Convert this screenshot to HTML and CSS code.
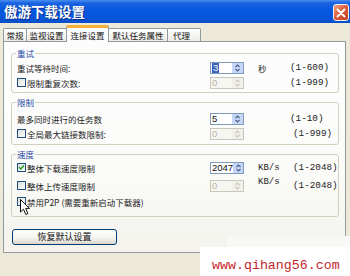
FILE: index.html
```html
<!DOCTYPE html>
<html lang="zh-CN">
<head>
<meta charset="utf-8">
<title>傲游下载设置</title>
<link rel="stylesheet" href="styles.css">
</head>
<body>
<div class="titlebar">
  <span class="title">傲游下载设置</span>
  <span class="close"><svg width="10" height="10" viewBox="0 0 10 10"><path d="M1.5 1.5 L8.5 8.5 M8.5 1.5 L1.5 8.5" stroke="#fff" stroke-width="2" stroke-linecap="round"/></svg></span>
</div>
<div class="tabs">
  <div class="tab t1">常规</div>
  <div class="tab t2">监视设置</div>
  <div class="tab t3 active">连接设置</div>
  <div class="tab t4">默认任务属性</div>
  <div class="tab t5">代理</div>
</div>
<div class="panel">
  <fieldset class="group g1">
    <legend>重试</legend>
    <div class="row">
      <span class="label">重试等待时间:</span>
      <span class="spin"><span class="val"><span class="sel">3</span></span><span class="arrows"><svg width="9" height="10" viewBox="0 0 9 10"><path d="M2.5 4 L4.5 2 L6.5 4 M2.5 6 L4.5 8 L6.5 6" fill="none" stroke="#4d6185" stroke-width="1.2"/></svg></span></span>
      <span class="unit">秒</span>
      <span class="range">(1-600)</span>
    </div>
    <div class="row">
      <span class="label"><span class="cb"></span>限制重复次数:</span>
      <span class="spin off"><span class="val">0</span><span class="arrows"><svg width="9" height="10" viewBox="0 0 9 10"><path d="M2.5 4 L4.5 2 L6.5 4 M2.5 6 L4.5 8 L6.5 6" fill="none" stroke="#c9c7ba" stroke-width="1.2"/></svg></span></span>
      <span class="unit"></span>
      <span class="range">(1-999)</span>
    </div>
  </fieldset>
  <fieldset class="group g2">
    <legend>限制</legend>
    <div class="row">
      <span class="label">最多同时进行的任务数</span>
      <span class="spin"><span class="val">5</span><span class="arrows"><svg width="9" height="10" viewBox="0 0 9 10"><path d="M2.5 4 L4.5 2 L6.5 4 M2.5 6 L4.5 8 L6.5 6" fill="none" stroke="#4d6185" stroke-width="1.2"/></svg></span></span>
      <span class="unit"></span>
      <span class="range">(1-10)</span>
    </div>
    <div class="row">
      <span class="label"><span class="cb"></span>全局最大链接数限制:</span>
      <span class="spin off"><span class="val">0</span><span class="arrows"><svg width="9" height="10" viewBox="0 0 9 10"><path d="M2.5 4 L4.5 2 L6.5 4 M2.5 6 L4.5 8 L6.5 6" fill="none" stroke="#c9c7ba" stroke-width="1.2"/></svg></span></span>
      <span class="unit"></span>
      <span class="range r2">(1-999)</span>
    </div>
  </fieldset>
  <fieldset class="group g3">
    <legend>速度</legend>
    <div class="row">
      <span class="label"><span class="cb"><svg width="7" height="7" viewBox="0 0 7 7"><path d="M1 3.2 L2.8 5 L6 1.5" fill="none" stroke="#21a121" stroke-width="1.5"/></svg></span>整体下载速度限制</span>
      <span class="spin"><span class="val">2047</span><span class="arrows"><svg width="9" height="10" viewBox="0 0 9 10"><path d="M2.5 4 L4.5 2 L6.5 4 M2.5 6 L4.5 8 L6.5 6" fill="none" stroke="#4d6185" stroke-width="1.2"/></svg></span></span>
      <span class="unit mono">KB/s</span>
      <span class="range r2">(1-2048)</span>
    </div>
    <div class="row r-mid">
      <span class="label"><span class="cb"></span>整体上传速度限制</span>
      <span class="spin off"><span class="val">0</span><span class="arrows"><svg width="9" height="10" viewBox="0 0 9 10"><path d="M2.5 4 L4.5 2 L6.5 4 M2.5 6 L4.5 8 L6.5 6" fill="none" stroke="#c9c7ba" stroke-width="1.2"/></svg></span></span>
      <span class="unit mono up">KB/s</span>
      <span class="range r2">(1-2048)</span>
    </div>
    <div class="row">
      <span class="label"><span class="cb"></span>禁用P2P (需要重新启动下载器)</span>
    </div>
  </fieldset>
  <div class="btn">恢复默认设置</div>
</div>
<svg class="cursor" width="11" height="17" viewBox="0 0 11 17"><path d="M0.5 0.5 L0.5 13 L3.5 10.2 L5.8 15.5 L7.9 14.6 L5.7 9.4 L9.5 9.4 Z" fill="#fff" stroke="#111" stroke-width="1" stroke-linejoin="round"/></svg>
<div class="strip"></div>
<div class="watermark">www.qihang56.com</div>
</body>
</html>
```

FILE: styles.css
```css
* { box-sizing: border-box; }
html, body { margin: 0; padding: 0; }
body {
  width: 350px;
  height: 276px;
  overflow: hidden;
  position: relative;
  background: #ece9d8;
  font-family: "Noto Sans CJK SC", "Noto Sans", sans-serif;
  font-size: 8.5px;
  color: #1c1c1c;
}
.titlebar {
  height: 23px;
  display: flex;
  align-items: center;
  justify-content: space-between;
  padding: 0 1px 0 4px;
  background: linear-gradient(#4a8ff0 0, #1a64e2 3px, #0758dd 10px, #0654d8 19px, #0a4fc8 23px);
}
.title {
  color: #fff;
  font-weight: bold;
  font-size: 13.5px;
  line-height: 23px;
  text-shadow: 1px 1px 0 #0a2f8a;
}
.close {
  width: 16px;
  height: 17px;
  margin-top: 2px;
  border: 1px solid #f4efe8;
  border-radius: 3px;
  background: linear-gradient(135deg, #f3a488, #dc5a36 50%, #c2401e);
  display: flex;
  align-items: center;
  justify-content: center;
}
.tabs {
  display: flex;
  align-items: flex-end;
  height: 18px;
  padding: 2px 0 0 3px;
}
.tab {
  height: 13px;
  border: 1px solid #919b9c;
  border-bottom: none;
  border-radius: 2px 2px 0 0;
  background: linear-gradient(#ffffff, #ecebe6);
  line-height: 12px;
  text-align: center;
  color: #111;
  white-space: nowrap;
}
.tab + .tab { margin-left: -1px; }
.t1 { width: 24px; }
.t2 { width: 41px; }
.t3 { width: 43px; }
.t4 { width: 60px; }
.t5 { width: 34px; text-align: left; padding-left: 5px; }
.tab.active {
  position: relative;
  z-index: 2;
  height: 17px;
  margin-bottom: -1px;
  border-top: 3px solid #f6b13b;
  background: #fcfcfe;
  line-height: 14px;
}
.panel {
  margin-left: 3px;
  width: 343px;
  border: 1px solid #919b9c;
  background: linear-gradient(#fdfdfe 0, #fbfbf9 60%, #f3f2ec 100%);
  padding: 5px 6px 7px 7px;
}
.group {
  margin: 0;
  min-width: 0;
  border: 1px solid #d0d0bf;
  border-radius: 3px;
  padding: 1px 4px 2px 5px;
}
.group legend {
  padding: 0 1px;
  margin-left: -1px;
  color: #2a4aa6;
  line-height: 12px;
  font-size: 8.5px;
}
.g2 { margin-top: 3px; padding-top: 3px; padding-bottom: 3px; }
.g3 { margin-top: 3px; padding-top: 0; padding-bottom: 7px; }
.row {
  display: grid;
  grid-template-columns: 193px 34px 46px 1fr;
  align-items: center;
  height: 15px;
  white-space: nowrap;
}
.r-mid { margin: 3px 0 1px; }
.label {
  display: flex;
  align-items: center;
  line-height: 12px;
}
.cb {
  flex: none;
  width: 9px;
  height: 9px;
  margin-right: 1px;
  border: 1px solid #1c5180;
  background: linear-gradient(135deg, #dcdcd7, #ffffff);
  display: flex;
  align-items: center;
  justify-content: center;
}
.spin {
  display: flex;
  height: 12px;
  border: 1px solid #7f9db9;
  background: #fff;
}
.spin .val {
  flex: 1;
  font-family: "Liberation Sans", sans-serif;
  font-size: 9.5px;
  line-height: 10px;
  padding-left: 1px;
  color: #111;
}
.sel {
  display: inline-block;
  background: #3a64b8;
  color: #fff;
  padding: 0 1px;
  line-height: 10px;
}
.spin .arrows {
  width: 11px;
  background: #c6d6f8;
  display: flex;
  align-items: center;
  justify-content: center;
}
.spin.off { border-color: #c9c7ba; background: #f7f7f2; }
.spin.off .val { color: #b4b2a6; }
.spin.off .arrows { background: #f1f0ea; }
.unit { font-size: 8.5px; line-height: 12px; padding-left: 14px; }
.mono {
  font-family: "Liberation Mono", monospace;
  font-size: 9px;
}
.up { margin-top: -7px; }
.range {
  font-family: "Liberation Mono", monospace;
  font-size: 9.3px;
  line-height: 12px;
  color: #222;
}
.r2 { padding-left: 3px; }
.btn {
  margin: 12px 0 0 1px;
  width: 105px;
  height: 16px;
  border: 1px solid #003c74;
  border-radius: 3px;
  background: linear-gradient(#ffffff, #f5f4ef 55%, #dcd7cb);
  font-size: 9px;
  line-height: 14px;
  text-align: center;
  color: #111;
}
.cursor {
  position: absolute;
  left: 20px;
  top: 199px;
}
.strip {
  position: absolute;
  left: 227px;
  top: 236px;
  width: 123px;
  height: 11px;
  background: linear-gradient(#f7f7f4, #f9f9f7);
}
.watermark {
  position: absolute;
  left: 200px;
  top: 247px;
  width: 150px;
  height: 29px;
  background: #ffffff;
  padding: 12px 0 0 12px;
  font-family: "Liberation Mono", monospace;
  font-size: 13.3px;
  line-height: 14px;
  color: #c4262e;
  white-space: nowrap;
}
```
